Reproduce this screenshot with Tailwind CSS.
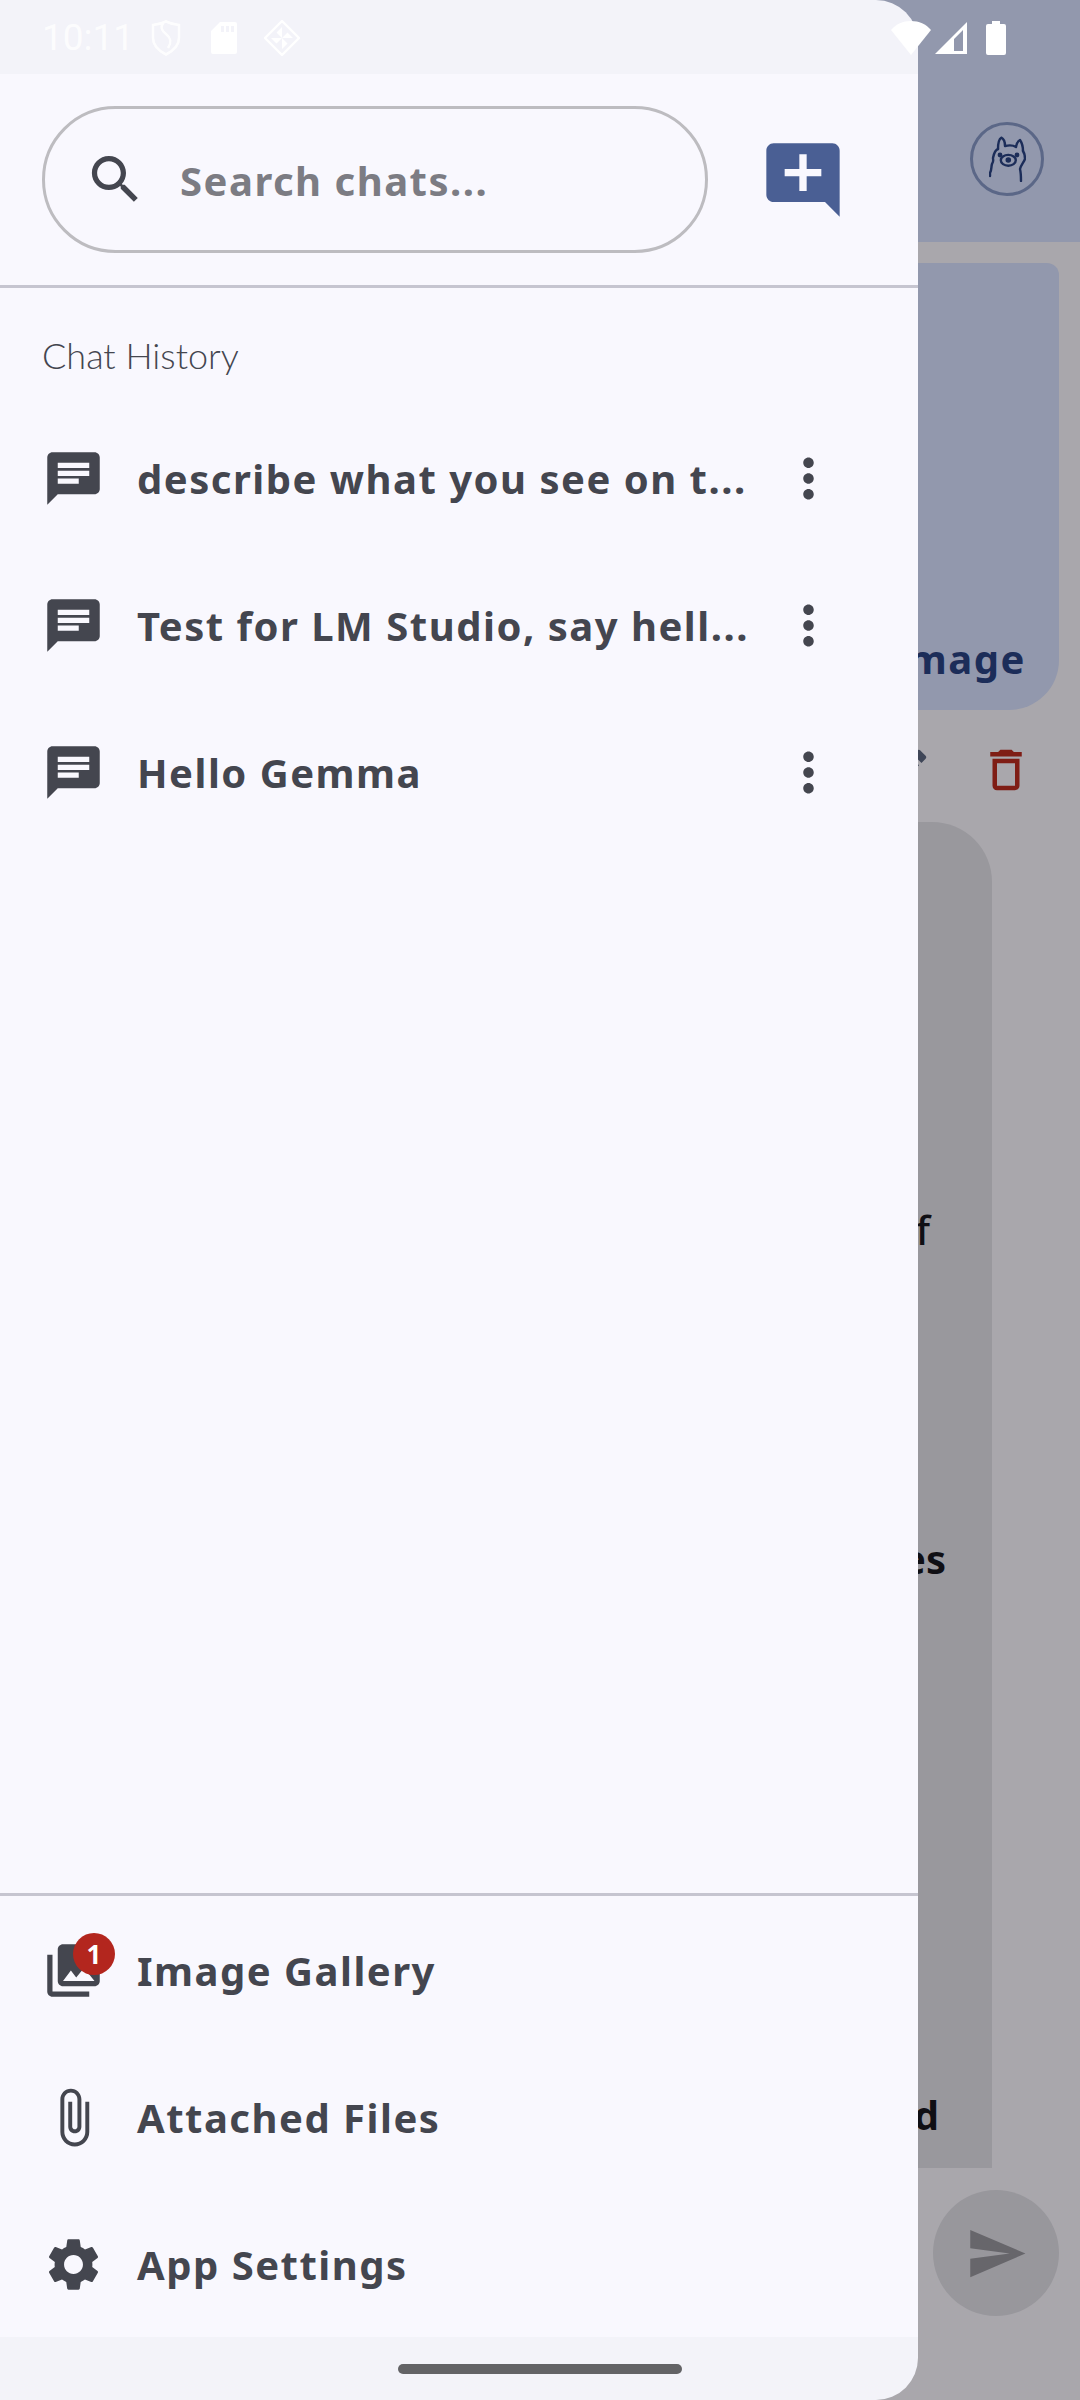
<!DOCTYPE html>
<html lang="en">
<head>
  <meta charset="UTF-8">
  <meta name="viewport" content="width=device-width, initial-scale=1.0">
  <title>Chat History</title>
  <script src="https://cdn.jsdelivr.net/npm/@tailwindcss/browser@4"></script>
</head>
<body class="font-['Noto_Sans',sans-serif]">
  <div class="relative w-[1080px] h-[2400px] overflow-hidden bg-[#a9a7ac]">

    <!-- Page behind the drawer -->
    <div class="flex flex-col h-full">
      <header class="h-[242px] bg-[#9298ad] flex justify-end items-start pt-[122px] pr-[36px] shrink-0">
        <div class="w-[74px] h-[74px] rounded-full border-[3px] border-[#5b6787] flex items-center justify-center">
          <svg viewBox="0 0 37 46" class="w-[37px] h-[46px] text-[#1c2d59]" fill="none" stroke="currentColor" stroke-width="2.4" stroke-linecap="round" stroke-linejoin="round">
            <path d="M9 13C9 8 10 3 12.300 1.700 15 3 16 7 16 10c4-1 8-1 11 1 .5-3 2-6 4-7 2 3 3 7 3 11"/>
            <path d="M9 13c-3 1-4 4-5 9 0 2 1 3-1 6-1 3 0 5-2 9 0 1 0 2 0 3"/>
            <path d="M34 15c2 3 2 6 2 8-1 3-4 6-5 10 1 4 1 8 1 12"/>
            <ellipse cx="19.300" cy="24.300" rx="7.500" ry="5.400"/>
            <circle cx="19.300" cy="24" r="1.600" fill="currentColor"/>
            <circle cx="11" cy="19" r="1.200" fill="currentColor"/>
            <circle cx="28" cy="19" r="1.200" fill="currentColor"/>
          </svg>
        </div>
      </header>

      <div class="mt-[21px] ml-auto mr-[21px] w-[400px] h-[447px] bg-[#9298ad] rounded-tr-[12px] rounded-b-[50px] flex items-end justify-end pb-[31px] pr-[33px] shrink-0">
        <span class="text-[40px] font-bold tracking-[1.5px] text-[#1c2d59] leading-none whitespace-nowrap">Attach Image</span>
      </div>

      <div class="h-[112px] flex items-center justify-end pt-[7px] pr-[47px] gap-[46px] shrink-0">
        <svg viewBox="0 0 24 24" class="w-[54px] h-[54px] text-[#3f4658]" fill="currentColor"><path d="M3 17.250V21h3.750L17.810 9.940l-3.750-3.750L3 17.250zM20.710 7.040c.39-.39.39-1.020 0-1.410l-2.340-2.340c-.39-.39-1.020-.39-1.410 0l-1.830 1.830 3.750 3.750 1.830-1.830z"/></svg>
        <svg viewBox="0 0 24 24" class="w-[54px] h-[54px] text-[#7f1d15]" fill="currentColor"><path d="M16 9v10H8V9h8m-1.500-6h-5l-1 1H5v2h14V4h-3.500l-1-1zM18 7H6v12c0 1.100.9 2 2 2h8c1.100 0 2-.9 2-2V7z"/></svg>
      </div>

      <div class="ml-auto mr-[88px] w-[400px] h-[1346px] bg-[#99989d] rounded-tr-[60px] relative shrink-0">
        <span class="absolute right-[62px] top-[388px] text-[40px] leading-none font-medium text-[#100f14]">of</span>
        <span class="absolute right-[46px] top-[717px] text-[40px] leading-none font-bold text-[#100f14]">Images</span>
        <span class="absolute right-[53px] top-[1273px] text-[40px] leading-none font-bold text-[#100f14]">Detailed</span>
      </div>

      <div class="flex justify-end pr-[21px] mt-[22px]">
        <div class="w-[126px] h-[126px] rounded-full bg-[#98979c] flex items-center justify-center">
          <svg viewBox="0 0 24 24" class="w-[63px] h-[63px] text-[#67666b]" fill="currentColor"><path d="M2.010 21L23 12 2.010 3 2 10l15 2-15 2z"/></svg>
        </div>
      </div>
    </div>

    <!-- Drawer -->
    <aside class="absolute inset-y-0 left-0 w-[918px] rounded-r-[42px] overflow-hidden bg-[#f3f3f9] flex flex-col">
      <div class="h-[74px] shrink-0"></div>
      <div class="flex-1 bg-[#f9f8fe] flex flex-col min-h-0">

        <div class="h-[214px] flex items-center pl-[42px] border-b-[3px] border-[#c6c5d0] shrink-0">
          <div class="w-[666px] h-[147px] rounded-full border-[3px] border-[#bdbcc0] flex items-center pl-[39px]">
            <svg viewBox="0 0 24 24" class="w-[63px] h-[63px] text-[#44464f]" fill="currentColor"><path d="M15.500 14h-.79l-.28-.27C15.410 12.590 16 11.110 16 9.500 16 5.910 13.090 3 9.500 3S3 5.910 3 9.500 5.910 16 9.500 16c1.610 0 3.090-.59 4.230-1.570l.27.28v.79l5 4.990L20.490 19l-4.990-5zm-6 0C7.010 14 5 11.990 5 9.500S7.010 5 9.500 5 14 7.010 14 9.500 11.990 14 9.500 14z"/></svg>
            <span class="ml-[33px] pt-[3px] text-[40px] font-bold tracking-[1.5px] text-[#7c7c83]">Search chats...</span>
          </div>
          <svg viewBox="0 0 24 24" class="ml-[51px] w-[88px] h-[88px] text-[#4a5f94]" fill="currentColor"><path d="M22 4c0-1.100-.9-2-2-2H4c-1.100 0-2 .9-2 2v12c0 1.100.9 2 2 2h14l4 4V4zm-5 7h-4v4h-2v-4H7V9h4V5h2v4h4v2z"/></svg>
        </div>

        <div class="flex-1 flex flex-col min-h-0">
          <p class="pl-[42px] pt-[45px] h-[117px] text-[36px] leading-[44px] font-['Lato',sans-serif] font-light text-[#44464f] shrink-0">Chat History</p>

          <div class="h-[147px] flex items-center pl-[42px] text-[#44464f] shrink-0">
            <svg viewBox="0 0 24 24" class="w-[63px] h-[63px] shrink-0" fill="currentColor"><path d="M20 2H4c-1.100 0-1.990.9-1.990 2L2 22l4-4h14c1.100 0 2-.9 2-2V4c0-1.100-.9-2-2-2zM6 9h12v2H6V9zm8 5H6v-2h8v2zm4-6H6V6h12v2z"/></svg>
            <span class="ml-[32px] w-[614px] whitespace-nowrap text-[40px] font-bold tracking-[1.5px]">describe what you see on t...</span>
            <svg viewBox="0 0 24 24" class="ml-[26px] w-[63px] h-[63px] shrink-0" fill="currentColor"><path d="M12 8c1.100 0 2-.9 2-2s-.9-2-2-2-2 .9-2 2 .9 2 2 2zm0 2c-1.100 0-2 .9-2 2s.9 2 2 2 2-.9 2-2-.9-2-2-2zm0 6c-1.100 0-2 .9-2 2s.9 2 2 2 2-.9 2-2-.9-2-2-2z"/></svg>
          </div>
          <div class="h-[147px] flex items-center pl-[42px] text-[#44464f] shrink-0">
            <svg viewBox="0 0 24 24" class="w-[63px] h-[63px] shrink-0" fill="currentColor"><path d="M20 2H4c-1.100 0-1.990.9-1.990 2L2 22l4-4h14c1.100 0 2-.9 2-2V4c0-1.100-.9-2-2-2zM6 9h12v2H6V9zm8 5H6v-2h8v2zm4-6H6V6h12v2z"/></svg>
            <span class="ml-[32px] w-[614px] whitespace-nowrap text-[40px] font-bold tracking-[1.5px]">Test for LM Studio, say hell...</span>
            <svg viewBox="0 0 24 24" class="ml-[26px] w-[63px] h-[63px] shrink-0" fill="currentColor"><path d="M12 8c1.100 0 2-.9 2-2s-.9-2-2-2-2 .9-2 2 .9 2 2 2zm0 2c-1.100 0-2 .9-2 2s.9 2 2 2 2-.9 2-2-.9-2-2-2zm0 6c-1.100 0-2 .9-2 2s.9 2 2 2 2-.9 2-2-.9-2-2-2z"/></svg>
          </div>
          <div class="h-[147px] flex items-center pl-[42px] text-[#44464f] shrink-0">
            <svg viewBox="0 0 24 24" class="w-[63px] h-[63px] shrink-0" fill="currentColor"><path d="M20 2H4c-1.100 0-1.990.9-1.990 2L2 22l4-4h14c1.100 0 2-.9 2-2V4c0-1.100-.9-2-2-2zM6 9h12v2H6V9zm8 5H6v-2h8v2zm4-6H6V6h12v2z"/></svg>
            <span class="ml-[32px] w-[614px] whitespace-nowrap text-[40px] font-bold tracking-[1.5px]">Hello Gemma</span>
            <svg viewBox="0 0 24 24" class="ml-[26px] w-[63px] h-[63px] shrink-0" fill="currentColor"><path d="M12 8c1.100 0 2-.9 2-2s-.9-2-2-2-2 .9-2 2 .9 2 2 2zm0 2c-1.100 0-2 .9-2 2s.9 2 2 2 2-.9 2-2-.9-2-2-2zm0 6c-1.100 0-2 .9-2 2s.9 2 2 2 2-.9 2-2-.9-2-2-2z"/></svg>
          </div>
        </div>

        <div class="border-t-[3px] border-[#c6c5d0] shrink-0 pt-[1px] h-[444px]">
          <div class="h-[147px] flex items-center pl-[42px] text-[#44464f]">
            <div class="relative w-[63px] h-[63px] shrink-0">
              <svg viewBox="0 0 24 24" class="w-[63px] h-[63px]" fill="currentColor"><path d="M22 16V4c0-1.100-.9-2-2-2H8c-1.100 0-2 .9-2 2v12c0 1.100.9 2 2 2h12c1.100 0 2-.9 2-2zm-11-4l2.030 2.710L16 11l4 5H8l3-4zM2 6v14c0 1.100.9 2 2 2h14v-2H4V6H2z"/></svg>
              <span class="absolute -top-[6px] -right-[10px] w-[42px] h-[42px] rounded-full bg-[#b3261e] text-white text-[26px] font-bold flex items-center justify-center leading-none">1</span>
            </div>
            <span class="ml-[32px] text-[40px] font-bold tracking-[1.5px]">Image Gallery</span>
          </div>
          <div class="h-[147px] flex items-center pl-[42px] text-[#44464f]">
            <svg viewBox="0 0 24 24" class="w-[63px] h-[63px] shrink-0" fill="currentColor"><path d="M16.500 6v11.500c0 2.210-1.790 4-4 4s-4-1.790-4-4V5c0-1.380 1.120-2.500 2.500-2.500s2.500 1.120 2.500 2.500v10.500c0 .55-.45 1-1 1s-1-.45-1-1V6H10v9.500c0 1.380 1.120 2.500 2.500 2.500s2.500-1.120 2.500-2.500V5c0-2.210-1.790-4-4-4S7 2.790 7 5v12.500c0 3.040 2.460 5.500 5.500 5.500s5.500-2.460 5.500-5.500V6h-1.500z"/></svg>
            <span class="ml-[32px] text-[40px] font-bold tracking-[1.5px]">Attached Files</span>
          </div>
          <div class="h-[147px] flex items-center pl-[42px] text-[#44464f]">
            <svg viewBox="0 0 24 24" class="w-[63px] h-[63px] shrink-0" fill="currentColor"><path d="M19.140 12.940c.04-.3.06-.61.06-.94 0-.32-.02-.64-.07-.94l2.030-1.580c.18-.14.23-.41.12-.61l-1.920-3.320c-.12-.22-.37-.29-.59-.22l-2.390.96c-.5-.38-1.030-.7-1.620-.94l-.36-2.540c-.04-.24-.24-.41-.48-.41h-3.840c-.24 0-.43.17-.47.41l-.36 2.540c-.59.24-1.130.57-1.620.94l-2.390-.96c-.22-.08-.47 0-.59.22L2.740 8.870c-.12.21-.08.47.12.61l2.030 1.580c-.05.3-.09.63-.09.94s.02.64.07.94l-2.030 1.580c-.18.14-.23.41-.12.61l1.920 3.320c.12.22.37.29.59.22l2.390-.96c.5.38 1.030.7 1.620.94l.36 2.540c.05.24.24.41.48.41h3.840c.24 0 .44-.17.47-.41l.36-2.540c.59-.24 1.130-.56 1.620-.94l2.390.96c.22.08.47 0 .59-.22l1.920-3.320c.12-.22.07-.47-.12-.61l-2.010-1.580zM12 15.600c-1.980 0-3.600-1.620-3.600-3.600s1.620-3.600 3.600-3.600 3.600 1.620 3.600 3.600-1.620 3.600-3.600 3.600z"/></svg>
            <span class="ml-[32px] text-[40px] font-bold tracking-[1.5px]">App Settings</span>
          </div>
        </div>
      </div>
      <div class="h-[63px] shrink-0"></div>
    </aside>

    <!-- Status bar, over everything -->
    <div class="absolute top-0 inset-x-0 h-[74px] flex items-center text-white pl-[42px] pr-[74px] pt-[1px]">
      <span class="font-['Roboto',sans-serif] text-[37px] leading-none opacity-80">10:11</span>
      <svg viewBox="0 0 30 36" class="ml-[17px] w-[30px] h-[36px] opacity-90" fill="none" stroke="currentColor" stroke-width="2.600"><path d="M15 1.500C19 3.500 23 4.500 28 5v13c0 8-6 13-13 16.500C8 31 2 26 2 18V5c5-.5 9-1.500 13-3.500z"/><path d="M12 3c-3 5-1 8 3 11 5 4 6 8 2 14"/></svg>
      <svg viewBox="0 0 26 32" class="ml-[30px] w-[26px] h-[32px]" fill="currentColor"><path fill-rule="evenodd" d="M9 0h15a2 2 0 0 1 2 2v28a2 2 0 0 1-2 2H2a2 2 0 0 1-2-2V9zM10 4v6h3V4zm5 0v6h3V4zm5 0v6h3V4z"/></svg>
      <svg viewBox="0 0 38 38" class="ml-[26px] w-[38px] h-[38px]" fill="currentColor"><path fill="none" stroke="currentColor" stroke-width="2.400" stroke-linejoin="round" d="M19 2l17 17-17 17L2 19z"/><path d="M19 8v11l-5.500-5.500zM30 19H19l5.500-5.500zM19 30V19l5.500 5.500zM8 19h11l-5.500 5.500z"/></svg>
      <div class="flex-1"></div>
      <svg viewBox="0 0 40 34" class="w-[40px] h-[34px]" fill="currentColor"><path d="M0 9C5 3 12 0 20 0s15 3 20 9L20 34z"/></svg>
      <svg viewBox="0 0 32 32" class="ml-[4px] w-[32px] h-[32px]" fill="currentColor"><path fill-rule="evenodd" d="M32 0v32H0zM19 17v12h9V8z"/></svg>
      <svg viewBox="0 0 20 34" class="ml-[19px] w-[20px] h-[34px]" fill="currentColor"><path d="M6 0h8v3h4a2 2 0 0 1 2 2v27a2 2 0 0 1-2 2H2a2 2 0 0 1-2-2V5a2 2 0 0 1 2-2h4z"/></svg>
    </div>

    <!-- Gesture handle -->
    <div class="absolute bottom-[26px] left-[398px] w-[284px] h-[10px] rounded-full bg-[#636366]"></div>
  </div>
</body>
</html>
